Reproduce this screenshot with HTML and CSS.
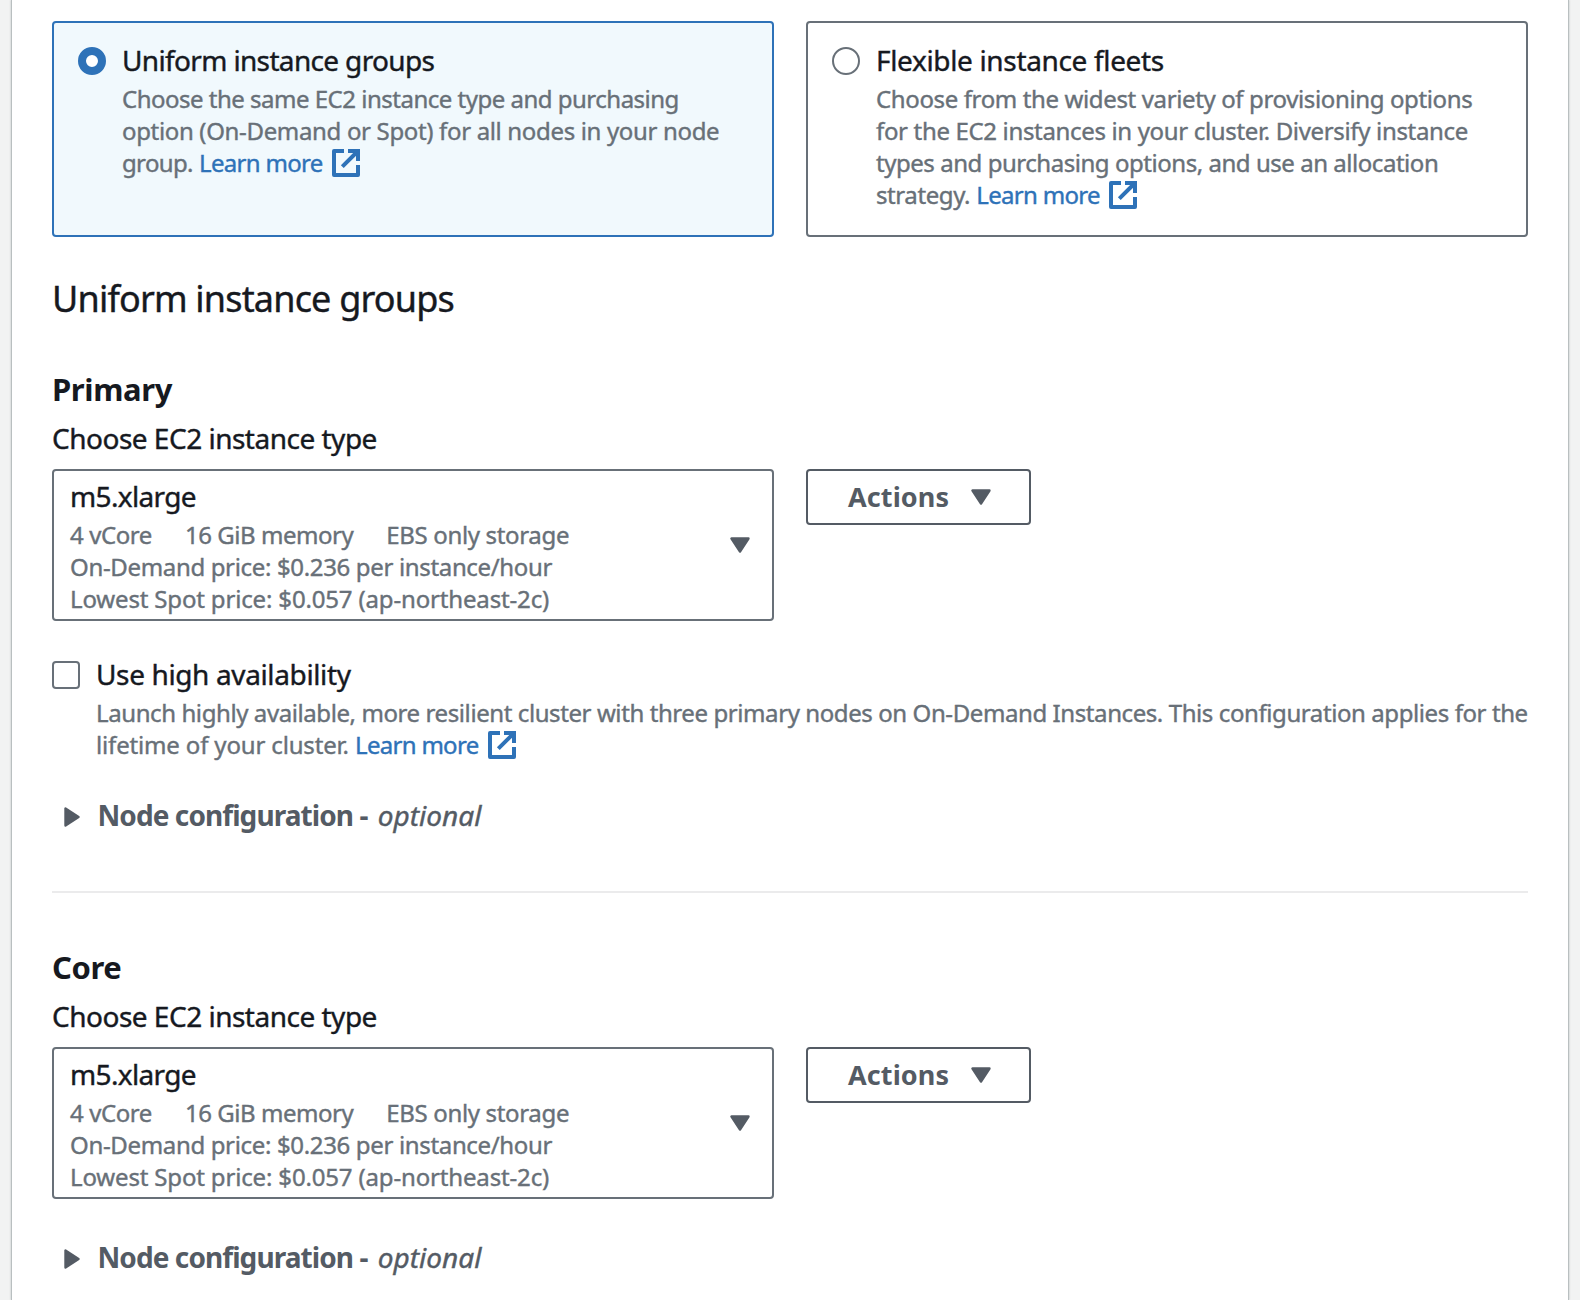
FILE: index.html
```html
<!DOCTYPE html>
<html lang="en">
<head>
<meta charset="utf-8">
<title>Cluster configuration</title>
<link rel="stylesheet" href="styles.css">
</head>
<body>
<svg width="0" height="0" class="defs" aria-hidden="true">
  <symbol id="external" viewBox="0 0 28 28"><path d="M12 2H2V26H26V16M16 2H26V12M26 2L10.3 17.7" fill="none" stroke="currentColor" stroke-width="4" stroke-linejoin="round"/><path d="M22 0H28V6Z" fill="currentColor"/></symbol>
  <symbol id="caret-down" viewBox="0 0 20 16"><path d="M1.5 1.5H18.5L10 14.5Z" fill="currentColor" stroke="currentColor" stroke-width="2.4" stroke-linejoin="round"/></symbol>
  <symbol id="caret-right" viewBox="0 0 16 20"><path d="M1.5 1.5V18.5L14.5 10Z" fill="currentColor" stroke="currentColor" stroke-width="2.4" stroke-linejoin="round"/></symbol>
</svg>
<main class="panel">
  <div class="tiles">
    <label class="tile selected">
      <span class="radio"></span>
      <span class="tile-body">
        <span class="label tr-65">Uniform instance groups</span>
        <span class="desc"><span class="tr-50">Choose the same EC2 instance type and purchasing</span><br><span class="tr-34">option (On-Demand or Spot) for all nodes in your node</span><br><span class="tr-65">group.</span> <a class="link">Learn more<svg class="ext"><use href="#external"/></svg></a></span>
      </span>
    </label>
    <label class="tile">
      <span class="radio"></span>
      <span class="tile-body">
        <span class="label tr-34">Flexible instance fleets</span>
        <span class="desc"><span class="tr-36">Choose from the widest variety of provisioning options</span><br><span class="tr-34">for the EC2 instances in your cluster. Diversify instance</span><br><span class="tr-46">types and purchasing options, and use an allocation</span><br><span class="tr-41">strategy.</span> <a class="link">Learn more<svg class="ext"><use href="#external"/></svg></a></span>
      </span>
    </label>
  </div>

  <h2 class="title">Uniform instance groups</h2>

  <section class="group">
    <h3 class="group-name">Primary</h3>
    <div class="label tr-50">Choose EC2 instance type</div>
    <div class="picker">
      <div class="select">
        <div class="select-text">
          <div class="label tr-65">m5.xlarge</div>
          <div class="desc">
            <div class="specs"><span class="tr-41">4 vCore</span><span class="tr-46">16 GiB memory</span><span class="tr-34">EBS only storage</span></div>
            <div class="tr-34">On-Demand price: $0.236 per instance/hour</div>
            <div class="tr-16">Lowest Spot price: $0.057 (ap-northeast-2c)</div>
          </div>
        </div>
        <svg class="caret"><use href="#caret-down"/></svg>
      </div>
      <button class="button"><span>Actions</span><svg class="caret"><use href="#caret-down"/></svg></button>
    </div>
    <label class="check">
      <span class="checkbox"></span>
      <span class="check-body">
        <span class="label tr-36">Use high availability</span>
        <span class="desc"><span class="tr-41">Launch highly available, more resilient cluster with three primary nodes on On-Demand Instances. This configuration applies for the</span><br><span class="tr-16">lifetime of your cluster.</span> <a class="link">Learn more<svg class="ext"><use href="#external"/></svg></a></span>
      </span>
    </label>
    <div class="expander"><svg class="arrow"><use href="#caret-right"/></svg><span><b>Node configuration -</b> <i>optional</i></span></div>
  </section>

  <hr class="divider">

  <section class="group">
    <h3 class="group-name">Core</h3>
    <div class="label tr-50">Choose EC2 instance type</div>
    <div class="picker">
      <div class="select">
        <div class="select-text">
          <div class="label tr-65">m5.xlarge</div>
          <div class="desc">
            <div class="specs"><span class="tr-41">4 vCore</span><span class="tr-46">16 GiB memory</span><span class="tr-34">EBS only storage</span></div>
            <div class="tr-34">On-Demand price: $0.236 per instance/hour</div>
            <div class="tr-16">Lowest Spot price: $0.057 (ap-northeast-2c)</div>
          </div>
        </div>
        <svg class="caret"><use href="#caret-down"/></svg>
      </div>
      <button class="button"><span>Actions</span><svg class="caret"><use href="#caret-down"/></svg></button>
    </div>
    <div class="expander"><svg class="arrow"><use href="#caret-right"/></svg><span><b>Node configuration -</b> <i>optional</i></span></div>
  </section>
</main>
</body>
</html>
```
FILE: styles.css
```css
* { box-sizing: border-box; }
html, body { height: 100%; }
body {
  margin: 0;
  padding: 0 11px;
  overflow: hidden;
  background: #f2f3f3;
  color: #16191f;
  font-family: "Noto Sans", "Open Sans", sans-serif;
  -webkit-text-stroke: 0.4px currentColor;
}
.defs { display: block; }
.panel {
  height: 1300px;
  padding: 21px 40px 0;
  background: #fff;
  border: solid #b9bfc0;
  border-width: 0 1px;
  box-shadow: 0 0 2px rgba(0, 28, 36, 0.25);
}

/* Text */
.label { display: block; font-size: 28px; line-height: 36px; }
.desc { display: block; margin-top: 5px; font-size: 24px; line-height: 32px; color: #687078; white-space: nowrap; }
.link { color: #2e72b8; letter-spacing: -0.7px; }
.ext { width: 28px; height: 28px; margin: -8px 0 0 9px; vertical-align: -5px; }
.title { margin: 40px 0 0; font-size: 36px; line-height: 44px; font-weight: 400; letter-spacing: -0.82px; }
.group-name { margin: 0 0 11px; font-size: 31px; line-height: 40px; font-weight: 700; letter-spacing: -0.4px; -webkit-text-stroke: 0; }

/* Tracking steps */
.tr-16 { letter-spacing: -0.16px; }
.tr-34 { letter-spacing: -0.34px; }
.tr-36 { letter-spacing: -0.37px; }
.tr-41 { letter-spacing: -0.41px; }
.tr-46 { letter-spacing: -0.46px; }
.tr-50 { letter-spacing: -0.5px; }
.tr-65 { letter-spacing: -0.65px; }

/* Radio tiles */
.tiles { display: grid; grid-template-columns: 1fr 1fr; gap: 32px; }
.tile {
  display: flex;
  gap: 16px;
  padding: 19px 24px 24px;
  border: 2px solid #687078;
  border-radius: 4px;
}
.tile.selected { border-color: #2e72b8; background: #f1f9fd; }
.radio {
  flex: none;
  width: 28px;
  height: 28px;
  margin-top: 5px;
  border: 2px solid #687078;
  border-radius: 50%;
  background: #fff;
}
.selected .radio { border: 8px solid #2e72b8; }

/* Instance groups */
.group { padding-top: 48px; }
.picker { display: flex; align-items: flex-start; gap: 32px; margin-top: 13px; }
.select {
  display: flex;
  align-items: center;
  justify-content: space-between;
  width: 722px;
  height: 152px;
  padding: 3px 22px 0 16px;
  border: 2px solid #687078;
  border-radius: 4px;
}
.specs { display: flex; gap: 33px; }
.caret { flex: none; width: 20px; height: 16px; color: #545b64; }
.select .caret { margin-top: -3px; }
.button {
  display: flex;
  align-items: center;
  justify-content: space-between;
  width: 225px;
  height: 56px;
  padding: 0 38px 0 40px;
  border: 2px solid #545b64;
  border-radius: 4px;
  background: #fff;
  color: #545b64;
  font: 700 27px/36px "Noto Sans", "Open Sans", sans-serif;
  letter-spacing: 0.1px;
  -webkit-text-stroke: 0;
}
.check { display: flex; gap: 16px; margin-top: 35px; }
.checkbox {
  flex: none;
  width: 28px;
  height: 28px;
  margin-top: 5px;
  border: 2px solid #687078;
  border-radius: 4px;
}
.expander {
  display: flex;
  align-items: center;
  gap: 17.5px;
  margin-top: 36px;
  padding-left: 12px;
  font-size: 28px;
  line-height: 36px;
  color: #545b64;
}
.expander b { letter-spacing: -0.92px; -webkit-text-stroke: 0; }
.expander i { margin-left: 3px; }
.picker + .expander { margin-top: 40px; }
.arrow { flex: none; width: 16px; height: 20px; margin-top: 4px; }
.divider { height: 2px; margin: 58px 0 6px; border: 0; background: #ebebec; }
```
